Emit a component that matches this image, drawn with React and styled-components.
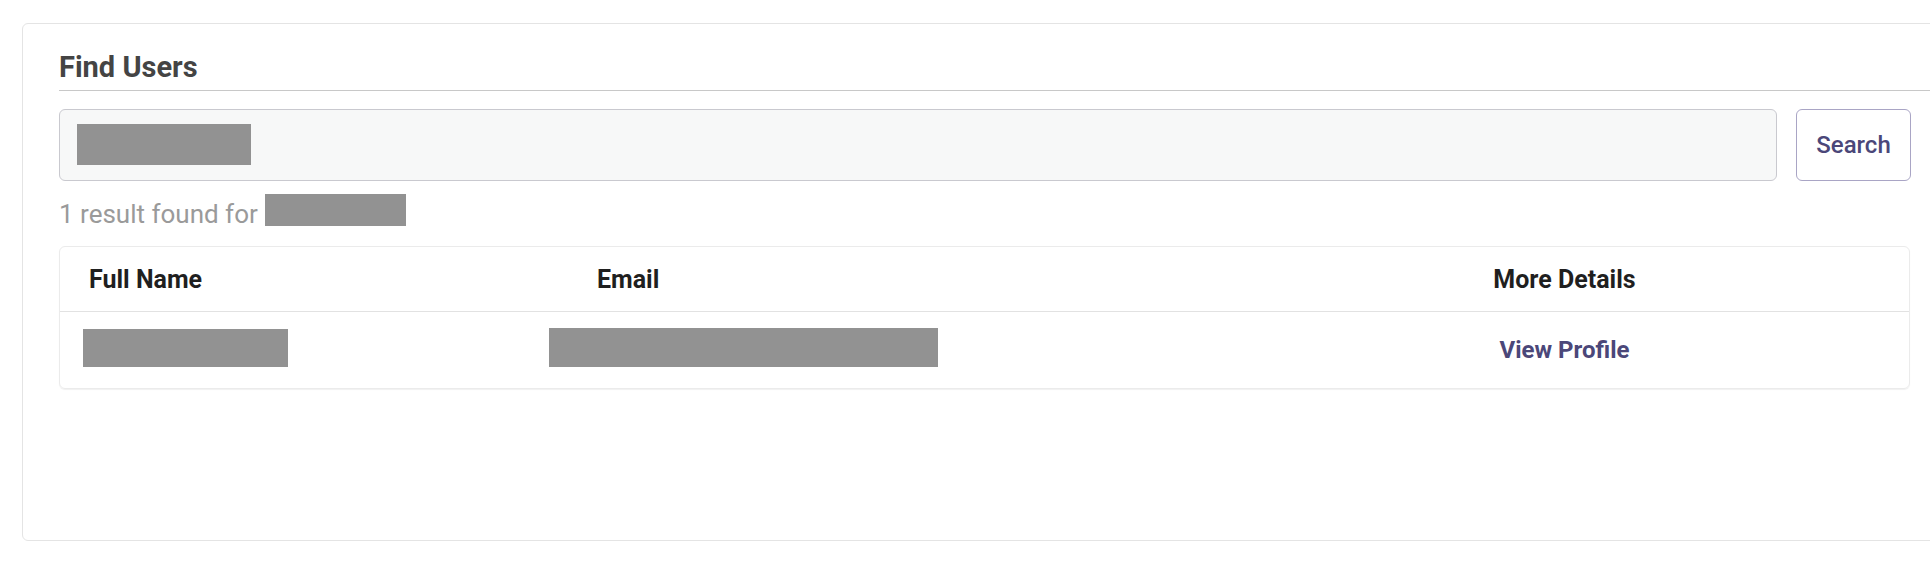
import styled, { createGlobalStyle } from "styled-components";

const GlobalStyle = createGlobalStyle`
  html, body {
    margin: 0;
    padding: 0;
    background: #ffffff;
    overflow: hidden;
  }
  body {
    font-family: Roboto, "Liberation Sans", sans-serif;
  }
`;

// redacted values, widths only
const users = [{ id: 1, nameWidth: 205, emailWidth: 389 }];

const App = () => {
  return (
    <>
      <GlobalStyle />
      <Page>
        <Card>
          <Title>Find Users</Title>
          <SearchRow>
            <SearchInput>
              <Redacted w={174} h={41} lift={2} />
            </SearchInput>
            <SearchButton type="button">Search</SearchButton>
          </SearchRow>
          <ResultLine>
            <span>1 result found for</span>
            <Redacted w={141} h={32} />
          </ResultLine>
          <Table>
            <HeaderRow>
              <Cell>Full Name</Cell>
              <Cell>Email</Cell>
              <Cell center>More Details</Cell>
            </HeaderRow>
            {users.map((u) => (
              <BodyRow key={u.id}>
                <Cell>
                  <Redacted w={u.nameWidth} h={38} shift={-6} lift={5} />
                </Cell>
                <Cell>
                  <Redacted w={u.emailWidth} h={39} shift={-48} lift={5} />
                </Cell>
                <Cell center>
                  <ProfileLink href="#">View Profile</ProfileLink>
                </Cell>
              </BodyRow>
            ))}
          </Table>
        </Card>
      </Page>
    </>
  );
};

const Page = styled.div`
  padding: 23px 0 0 22px;
`;

const Card = styled.div`
  box-sizing: border-box;
  width: 2000px;
  height: 518px;
  border: 1px solid #e4e4e4;
  border-radius: 6px;
  padding: 26px 0 0 36px;
  background: #ffffff;
`;

const Title = styled.h2`
  margin: 0;
  font-size: 29px;
  line-height: 34px;
  font-weight: 700;
  color: #444444;
  padding-bottom: 6px;
  border-bottom: 1px solid #c8c8c8;
`;

const SearchRow = styled.div`
  display: flex;
  gap: 19px;
  width: 1852px;
  margin-top: 18px;
`;

const SearchInput = styled.div`
  box-sizing: border-box;
  flex: 1;
  height: 72px;
  display: flex;
  align-items: center;
  padding: 0 17px;
  background: #f7f8f8;
  border: 1px solid #c9c9cf;
  border-radius: 6px;
`;

const SearchButton = styled.button`
  box-sizing: border-box;
  width: 115px;
  height: 72px;
  background: #ffffff;
  border: 1px solid #a9a5c5;
  border-radius: 6px;
  color: #4b4779;
  font-family: Roboto, sans-serif;
  font-size: 24px;
  font-weight: 500;
  cursor: pointer;
`;

const Redacted = styled.span`
  display: inline-block;
  flex: none;
  width: ${(p) => p.w}px;
  height: ${(p) => p.h}px;
  margin-left: ${(p) => p.shift || 0}px;
  margin-top: ${(p) => -(p.lift || 0)}px;
  background: #929292;
`;

const ResultLine = styled.div`
  display: flex;
  align-items: flex-end;
  gap: 7px;
  margin-top: 13px;
  height: 32px;
  color: #9a9a9a;
  font-size: 26px;
  line-height: 30px;

  > span:first-child {
    margin-bottom: -3px;
  }
`;

const Table = styled.div`
  width: 1849px;
  margin-top: 20px;
  border: 1px solid #ebebeb;
  border-radius: 6px;
  box-shadow: 0 1px 1px rgba(0, 0, 0, 0.06);
`;

const Row = styled.div`
  display: grid;
  grid-template-columns: 508px 652px 1fr;
  align-items: center;
`;

const HeaderRow = styled(Row)`
  height: 64px;
  border-bottom: 1px solid #e2e2e2;
  font-size: 25px;
  font-weight: 700;
  color: #1f1f1f;
`;

const BodyRow = styled(Row)`
  height: 76px;
`;

const Cell = styled.div`
  display: flex;
  align-items: center;
  justify-content: ${(p) => (p.center ? "center" : "flex-start")};
  padding-left: ${(p) => (p.center ? 0 : 29)}px;
`;

const ProfileLink = styled.a`
  color: #4b4779;
  font-size: 24px;
  font-weight: 700;
  text-decoration: none;
`;

export default App;
